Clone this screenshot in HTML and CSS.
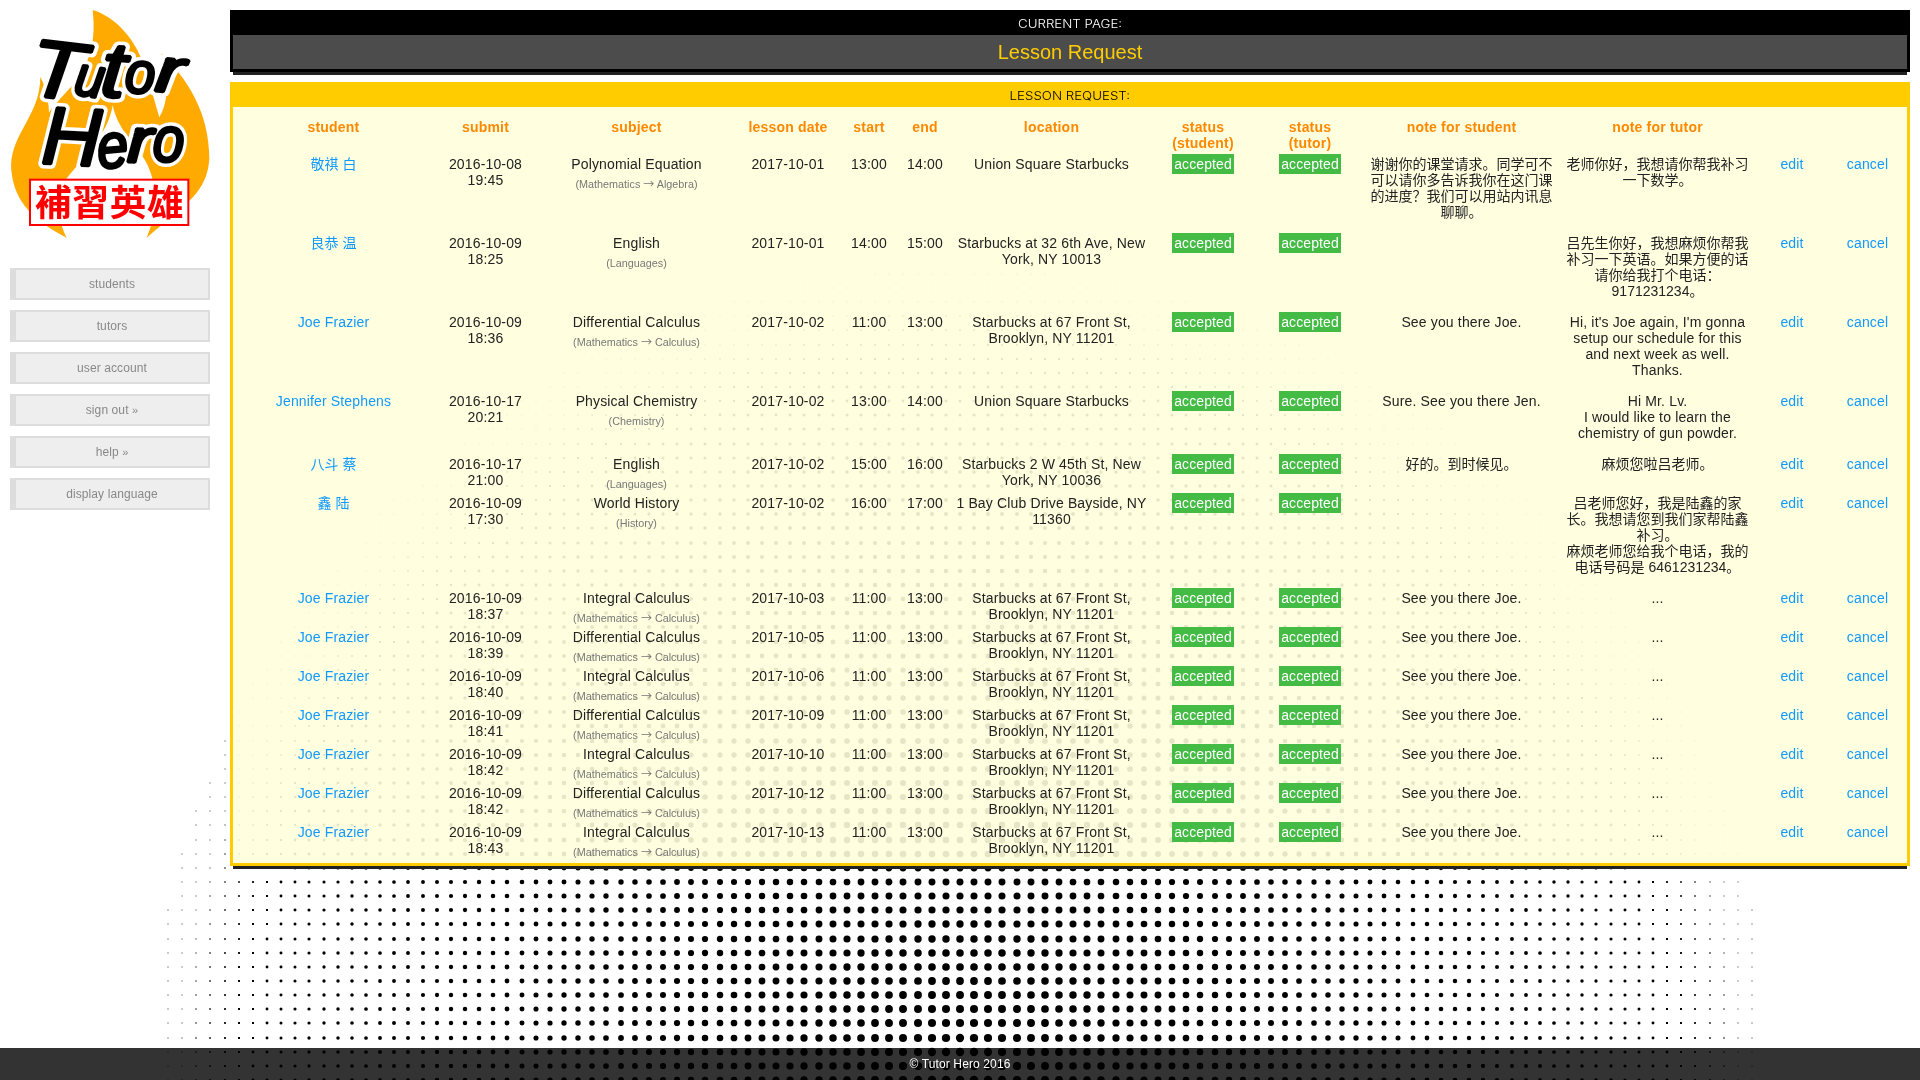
FILE: index.html
```html
<!DOCTYPE html>
<html lang="en">
<head>
<meta charset="utf-8">
<title>Tutor Hero - Lesson Request</title>
<link rel="stylesheet" href="styles.css">
</head>
<body>
<svg class="halftone" id="halftone" width="1920" height="1080" aria-hidden="true"></svg>
<div class="page">
  <aside class="sidebar">
    <svg class="logo" viewBox="30 30 600 690" width="200" height="230">
      <defs>
        <g id="brush" class="brush">
          <g transform="translate(80 284) rotate(7) scale(1.1 1)"><text font-size="245">T</text></g>
          <g transform="translate(218 282) rotate(9) scale(.92 1)"><text font-size="170">u</text></g>
          <g transform="translate(298 288) rotate(4) scale(1.15 1)"><text font-size="236">t</text></g>
          <g transform="translate(372 276) rotate(4) scale(.92 1)"><text font-size="176">o</text></g>
          <g transform="translate(462 272) rotate(6) scale(1.35 1)"><text font-size="190">r</text></g>
          <g transform="translate(122 490) rotate(3) scale(1.0 1)"><text font-size="245">H</text></g>
          <g transform="translate(296 506) rotate(-5) scale(.88 1)"><text font-size="190">e</text></g>
          <g transform="translate(380 486) rotate(2) scale(1.2 1)"><text font-size="190">r</text></g>
          <g transform="translate(456 482) rotate(3) scale(.88 1)"><text font-size="192">o</text></g>
        </g>
      </defs>
      <path fill="#fa0" d="M278 30C330 45 382 92 412 150C440 205 452 265 478 352C498 320 515 250 484 160C560 235 628 335 628 478C620 575 568 606 440 713C470 640 478 580 445 500C420 440 355 400 338 315C325 400 260 460 200 535C165 600 175 665 200 713C85 655 36 590 33 495C38 395 120 345 121 231C138 262 146 300 147 338C190 270 300 220 278 30Z"/>
      <use href="#brush" class="halo"/>
      <use href="#brush" class="ink"/>
      <rect x="90" y="539" width="475" height="136" fill="#fff" stroke="#f00" stroke-width="6"/>
      <text class="seal" x="328" y="648" text-anchor="middle" textLength="446">補習英雄</text>
    </svg>
    <nav class="menu">
      <a>students</a>
      <a>tutors</a>
      <a>user account</a>
      <a>sign out <small>»</small></a>
      <a>help <small>»</small></a>
      <a>display language</a>
    </nav>
  </aside>
  <main class="content">
    <section class="card current">
      <h2><span>CURRENT PAGE:</span></h2>
      <p class="page-name">Lesson Request</p>
    </section>
    <section class="card requests">
      <h2><span>LESSON REQUEST:</span></h2>
      <table>
        <colgroup><col class="c-student"><col class="c-submit"><col class="c-subject"><col class="c-date"><col class="c-time"><col class="c-time"><col class="c-location"><col class="c-st1"><col class="c-st2"><col class="c-note1"><col class="c-note2"><col class="c-edit"><col class="c-cancel"></colgroup>
        <thead><tr><th>student</th><th>submit</th><th>subject</th><th>lesson date</th><th>start</th><th>end</th><th>location</th><th>status<br>(student)</th><th>status<br>(tutor)</th><th>note for student</th><th>note for tutor</th><th></th><th></th></tr></thead>
        <tbody>
        <tr><td><a class="zh">敬祺 白</a></td><td>2016-10-08<br>19:45</td><td>Polynomial Equation<small>(Mathematics <i>→</i> Algebra)</small></td><td>2017-10-01</td><td>13:00</td><td>14:00</td><td>Union Square Starbucks</td><td><b>accepted</b></td><td><b>accepted</b></td><td class="note zh">谢谢你的课堂请求。同学可不<br>可以请你多告诉我你在这门课<br>的进度？我们可以用站内讯息<br>聊聊。</td><td class="note zh">老师你好，我想请你帮我补习<br>一下数学。</td><td><a>edit</a></td><td><a>cancel</a></td></tr>
        <tr><td><a class="zh">良恭 温</a></td><td>2016-10-09<br>18:25</td><td>English<small>(Languages)</small></td><td>2017-10-01</td><td>14:00</td><td>15:00</td><td>Starbucks at 32 6th Ave, New<br>York, NY 10013</td><td><b>accepted</b></td><td><b>accepted</b></td><td></td><td class="note zh">吕先生你好，我想麻烦你帮我<br>补习一下英语。如果方便的话<br>请你给我打个电话：<br>9171231234。</td><td><a>edit</a></td><td><a>cancel</a></td></tr>
        <tr><td><a>Joe Frazier</a></td><td>2016-10-09<br>18:36</td><td>Differential Calculus<small>(Mathematics <i>→</i> Calculus)</small></td><td>2017-10-02</td><td>11:00</td><td>13:00</td><td>Starbucks at 67 Front St,<br>Brooklyn, NY 11201</td><td><b>accepted</b></td><td><b>accepted</b></td><td>See you there Joe.</td><td class="note">Hi, it's Joe again, I'm gonna<br>setup our schedule for this<br>and next week as well.<br>Thanks.</td><td><a>edit</a></td><td><a>cancel</a></td></tr>
        <tr><td><a>Jennifer Stephens</a></td><td>2016-10-17<br>20:21</td><td>Physical Chemistry<small>(Chemistry)</small></td><td>2017-10-02</td><td>13:00</td><td>14:00</td><td>Union Square Starbucks</td><td><b>accepted</b></td><td><b>accepted</b></td><td>Sure. See you there Jen.</td><td class="note">Hi Mr. Lv.<br>I would like to learn the<br>chemistry of gun powder.</td><td><a>edit</a></td><td><a>cancel</a></td></tr>
        <tr><td><a class="zh">八斗 蔡</a></td><td>2016-10-17<br>21:00</td><td>English<small>(Languages)</small></td><td>2017-10-02</td><td>15:00</td><td>16:00</td><td>Starbucks 2 W 45th St, New<br>York, NY 10036</td><td><b>accepted</b></td><td><b>accepted</b></td><td class="zh">好的。到时候见。</td><td class="zh">麻烦您啦吕老师。</td><td><a>edit</a></td><td><a>cancel</a></td></tr>
        <tr><td><a class="zh">鑫 陆</a></td><td>2016-10-09<br>17:30</td><td>World History<small>(History)</small></td><td>2017-10-02</td><td>16:00</td><td>17:00</td><td>1 Bay Club Drive Bayside, NY<br>11360</td><td><b>accepted</b></td><td><b>accepted</b></td><td></td><td class="note zh">吕老师您好，我是陆鑫的家<br>长。我想请您到我们家帮陆鑫<br>补习。<br>麻烦老师您给我个电话，我的<br>电话号码是 6461231234。</td><td><a>edit</a></td><td><a>cancel</a></td></tr>
        <tr><td><a>Joe Frazier</a></td><td>2016-10-09<br>18:37</td><td>Integral Calculus<small>(Mathematics <i>→</i> Calculus)</small></td><td>2017-10-03</td><td>11:00</td><td>13:00</td><td>Starbucks at 67 Front St,<br>Brooklyn, NY 11201</td><td><b>accepted</b></td><td><b>accepted</b></td><td>See you there Joe.</td><td>...</td><td><a>edit</a></td><td><a>cancel</a></td></tr>
        <tr><td><a>Joe Frazier</a></td><td>2016-10-09<br>18:39</td><td>Differential Calculus<small>(Mathematics <i>→</i> Calculus)</small></td><td>2017-10-05</td><td>11:00</td><td>13:00</td><td>Starbucks at 67 Front St,<br>Brooklyn, NY 11201</td><td><b>accepted</b></td><td><b>accepted</b></td><td>See you there Joe.</td><td>...</td><td><a>edit</a></td><td><a>cancel</a></td></tr>
        <tr><td><a>Joe Frazier</a></td><td>2016-10-09<br>18:40</td><td>Integral Calculus<small>(Mathematics <i>→</i> Calculus)</small></td><td>2017-10-06</td><td>11:00</td><td>13:00</td><td>Starbucks at 67 Front St,<br>Brooklyn, NY 11201</td><td><b>accepted</b></td><td><b>accepted</b></td><td>See you there Joe.</td><td>...</td><td><a>edit</a></td><td><a>cancel</a></td></tr>
        <tr><td><a>Joe Frazier</a></td><td>2016-10-09<br>18:41</td><td>Differential Calculus<small>(Mathematics <i>→</i> Calculus)</small></td><td>2017-10-09</td><td>11:00</td><td>13:00</td><td>Starbucks at 67 Front St,<br>Brooklyn, NY 11201</td><td><b>accepted</b></td><td><b>accepted</b></td><td>See you there Joe.</td><td>...</td><td><a>edit</a></td><td><a>cancel</a></td></tr>
        <tr><td><a>Joe Frazier</a></td><td>2016-10-09<br>18:42</td><td>Integral Calculus<small>(Mathematics <i>→</i> Calculus)</small></td><td>2017-10-10</td><td>11:00</td><td>13:00</td><td>Starbucks at 67 Front St,<br>Brooklyn, NY 11201</td><td><b>accepted</b></td><td><b>accepted</b></td><td>See you there Joe.</td><td>...</td><td><a>edit</a></td><td><a>cancel</a></td></tr>
        <tr><td><a>Joe Frazier</a></td><td>2016-10-09<br>18:42</td><td>Differential Calculus<small>(Mathematics <i>→</i> Calculus)</small></td><td>2017-10-12</td><td>11:00</td><td>13:00</td><td>Starbucks at 67 Front St,<br>Brooklyn, NY 11201</td><td><b>accepted</b></td><td><b>accepted</b></td><td>See you there Joe.</td><td>...</td><td><a>edit</a></td><td><a>cancel</a></td></tr>
        <tr><td><a>Joe Frazier</a></td><td>2016-10-09<br>18:43</td><td>Integral Calculus<small>(Mathematics <i>→</i> Calculus)</small></td><td>2017-10-13</td><td>11:00</td><td>13:00</td><td>Starbucks at 67 Front St,<br>Brooklyn, NY 11201</td><td><b>accepted</b></td><td><b>accepted</b></td><td>See you there Joe.</td><td>...</td><td><a>edit</a></td><td><a>cancel</a></td></tr>
        </tbody>
      </table>
    </section>
  </main>
</div>
<footer class="footer">© Tutor Hero 2016</footer>
<script src="halftone.js"></script>
</body>
</html>
```
FILE: styles.css
```css
* { box-sizing: border-box; }
html, body { height: 100%; }
body {
  margin: 0;
  background: #fff;
  color: #222;
  font: 14px/16px "Liberation Sans", Arial, "Noto Sans CJK SC", sans-serif;
  overflow: hidden;
}
.halftone { position: fixed; left: 0; top: 0; z-index: -1; }
.page { display: flex; gap: 20px; padding: 10px; }
.sidebar { flex: 0 0 200px; }
.logo { display: block; }
.brush text {
  font-family: "Liberation Sans", Arial, sans-serif;
  font-style: italic;
}
.halo { fill: #fff; stroke: #fff; stroke-width: 30px; stroke-linejoin: round; }
.ink { fill: #000; stroke: #000; stroke-width: 9px; stroke-linejoin: bevel; }
.seal { font: bold 110px "Noto Sans CJK TC", sans-serif; fill: #f00; }
.menu { display: flex; flex-direction: column; gap: 10px; margin-top: 28px; }
.menu a {
  height: 32px;
  border: 2px solid #ddd;
  border-left-width: 6px;
  background: #eee;
  color: #888;
  font-size: 12px;
  line-height: 29px;
  letter-spacing: .1px;
  text-align: center;
}
.menu small { font-size: 11px; }
.content { flex: 1; display: flex; flex-direction: column; gap: 10px; }
.card { border: 3px solid; border-top: 0; box-shadow: 0 6px 0 -3px #222; }
.card h2 {
  margin: 0;
  height: 25px;
  font: 300 11px/29px Inter, sans-serif;
  text-align: center;
}
.card h2 span { display: inline-block; transform: scaleX(1.21); }
.current { height: 62px; border-color: #000; background: rgba(0, 0, 0, .7); background-clip: padding-box; }
.current h2 { background: #000; color: #fff; }
.page-name { margin: 0; color: #fc0; font-size: 20px; line-height: 34px; text-align: center; }
.requests { border-color: #fc0; background: rgba(255, 255, 221, .9); background-clip: padding-box; }
.requests h2 { background: #fc0; color: #000; }
table { width: 1673px; margin: 12px 0 0 1px; table-layout: fixed; border-collapse: collapse; }
.c-student { width: 199px; }
.c-submit { width: 105px; }
.c-subject { width: 197px; }
.c-date { width: 106px; }
.c-time { width: 56px; }
.c-location { width: 197px; }
.c-st1 { width: 106px; }
.c-st2 { width: 108px; }
.c-note1 { width: 195px; }
.c-note2 { width: 197px; }
.c-edit { width: 72px; }
.c-cancel { width: 79px; }
th, td { padding: 0; vertical-align: top; text-align: center; white-space: nowrap; letter-spacing: .15px; }
thead tr { height: 37px; }
tbody tr { height: 39px; }
th { color: #f80; font-weight: bold; letter-spacing: .2px; }
td a { color: #19f; }
td b { padding: 2px; background: #4b4; color: #fff; font-weight: normal; letter-spacing: .1px; }
td small { display: block; margin-top: 4px; color: #777; font-size: 10.8px; line-height: 16px; letter-spacing: 0; }
td i { font: normal 11px/1 "Noto Sans CJK SC", sans-serif; }
.note { padding-bottom: 15px; }
.zh { letter-spacing: 0; }
.footer {
  position: fixed;
  left: 0;
  right: 0;
  bottom: 0;
  height: 32px;
  background: rgba(0, 0, 0, .8);
  color: #fff;
  font-size: 12px;
  line-height: 32px;
  letter-spacing: .12px;
  text-align: center;
}
```
FILE: halftone.js
```js
// Radial halftone centred on the bottom edge: dots shrink, then fade, with distance.
var svg = document.getElementById('halftone');
var steps = [0, 14, 28, 42, 56, 70, 84];
var marks = '';
function grid(origin, from, to) {
  var out = [];
  for (var base = origin; base < to; base += 99) {
    steps.forEach(function (s) { if (base + s >= from && base + s <= to) out.push(base + s); });
  }
  return out;
}
var xs = grid(126, 160, 1760);
var ys = grid(246, 260, 1085);
ys.forEach(function (y) {
  xs.forEach(function (x) {
    var d = Math.hypot(x - 960, y - 1080);
    if (d > 811) return;
    if (d > 708) {
      var a = Math.min(1, Math.max(0.2, (795 - d) / 70));
      marks += '<rect x="' + (x - 1) + '" y="' + (y - 1) + '" width="2" height="2" fill-opacity="' + a.toFixed(2) + '"/>';
    } else {
      marks += '<circle cx="' + x + '" cy="' + y + '" r="' + (4.3 - 0.0041 * d).toFixed(2) + '"/>';
    }
  });
});
svg.innerHTML = marks;
```
